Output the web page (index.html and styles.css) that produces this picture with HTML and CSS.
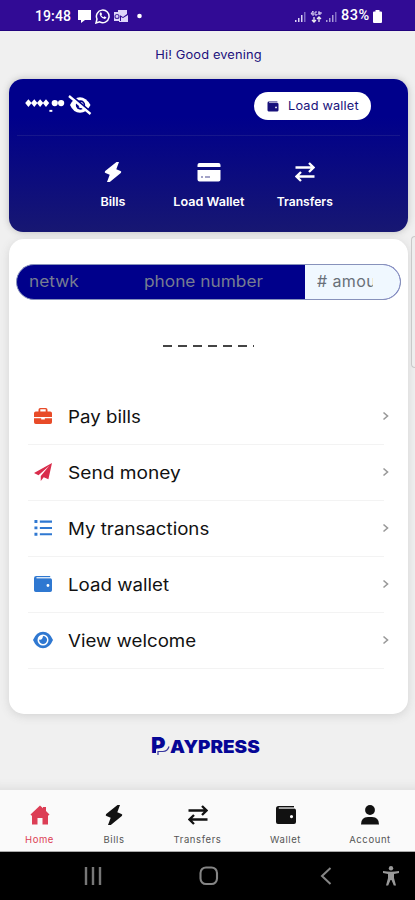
FILE: index.html
```html
<!DOCTYPE html>
<html lang="en">
<head>
<meta charset="utf-8">
<title>Paypress</title>
<link rel="stylesheet" href="styles.css">
</head>
<body>
<svg class="defs" aria-hidden="true">
  <symbol id="bolt" viewBox="0 0 20 20"><path d="M13.500 0 2.200 9q-1.200 1.300.3 2l4.200 1.800L4 20h2.800L17.800 11q1.200-1.300-.3-2l-4.200-1.800L16 0z"/></symbol>
  <symbol id="swap" viewBox="0 0 20 20"><path d="M.5 5.500H18M14 1l4.500 4.500L14 10M19.500 14.500H2M6 10l-4.500 4.500L6 19" fill="none" stroke="currentColor" stroke-width="2.300"/></symbol>
  <symbol id="wallet" viewBox="0 0 20 20"><path d="M2.500 1H18v1.500H2.800v1H18q2 0 2 2v11.500q0 2-2 2H2q-2 0-2-2V3.500Q0 1 2.500 1zm13 9a1.600 1.600 0 1 0 0 3.200 1.600 1.600 0 0 0 0-3.200z" fill-rule="evenodd"/><path class="flap" d="M2.800 2.500H18v1.300H2.800z"/></symbol>
  <symbol id="chev" viewBox="0 0 8 10"><path d="M1.500 1.500 5.500 5l-4 3.500" fill="none" stroke="currentColor" stroke-width="1.600"/></symbol>
</svg>
<div class="phone">
  <header class="status">
    <span class="time">19:48</span>
    <svg class="notices" viewBox="0 0 68 16">
      <path d="M1 2h13v10H8l-4 3v-3H1z" fill="#fff"/>
      <path d="m19 15 1-4a6.300 6.300 0 1 1 2.700 2.900z" fill="none" stroke="#fff" stroke-width="1.500"/>
      <path d="M23 4.500q-1 1.500.5 3.700 2 2.900 4.500 2.800l1.500-1.500-2-1.300-1 1q-1.500-.7-2.200-2l.8-1-.8-1.800z" fill="#fff"/>
      <path d="M41 2h9v4l-4 3-5-3zM37 4h6v9h-6zM44 9l2 1 5-3v7h-9v-1h2z" fill="#ded5fa"/>
      <circle cx="40" cy="8.500" r="2" fill="none" stroke="#4c2ba5" stroke-width="1.200"/>
      <circle cx="62.500" cy="8" r="2.300" fill="#fff"/>
    </svg>
    <svg class="signals" viewBox="0 0 44 16">
      <path d="M1 12h1.500v2H1zM4 10h1.500v4H4zM7 7h1.500v7H7z" fill="#ddd4f5"/>
      <path d="M10 4h1.500v10H10zM41 4h1.500v10H41z" fill="#806bc4"/>
      <path d="m19 3-2 3h3M19 3v5M23 4h-2v3h2V6M25 3v4M24 5h4M26 4v3" fill="none" stroke="#ddd4f5"/>
      <path d="M20 9v5m-2-2 2 2 2-2M25 14V9m-2 2 2-2 2 2" fill="none" stroke="#eee" stroke-width="1.300"/>
      <path d="M32 12h1.500v2H32zM35 10h1.500v4H35zM38 7h1.500v7H38z" fill="#aa9ad8"/>
    </svg>
    <span class="percent">83%</span>
    <svg class="battery" viewBox="0 0 9 13"><path d="M2.500 0h4v1.500H8q1 0 1 1V12q0 1-1 1H1q-1 0-1-1V2.500q0-1 1-1h1.500z" fill="#fff"/></svg>
  </header>

  <main class="page">
    <p class="greeting"><span>Hi! Good evening</span></p>

    <section class="balance">
      <div class="balance-top">
        <svg class="hidden-amount" viewBox="0 0 42 16" fill="#fff"><path d="m3.500 2 3.300 4-3.300 4-3.300-4zM9.500 2l3.300 4-3.300 4-3.300-4zM15.500 2l3.300 4-3.300 4-3.300-4zM21.500 2l3.300 4-3.300 4-3.300-4z"/><circle cx="30.500" cy="6" r="3.200"/><circle cx="37" cy="6" r="3.200"/><path d="M25 13h3v2h-3z"/></svg>
        <svg class="eye-off" viewBox="0 0 24 20"><path d="M2 10q4-7.800 10-7.800T22.500 10q-4 7.800-10.500 7.800T2 10z" fill="#fff"/><circle cx="12.500" cy="10" r="4.700" fill="#00008a"/><path d="M12.500 7a3 3 0 1 1-2 5l2-2z" fill="#fff"/><path d="m3 0 20 17" stroke="#00008a" stroke-width="1.800"/><path d="m1 1 21.500 18" stroke="#fff" stroke-width="2.300"/></svg>
        <button class="load-pill"><svg><use href="#wallet"/></svg><span>Load wallet</span></button>
      </div>
      <nav class="actions">
        <a class="action"><svg><use href="#bolt"/></svg><span>Bills</span></a>
        <a class="action"><svg class="card-icon" viewBox="0 0 24 20"><path d="M2.500 1h19q2 0 2 2v2H.5V3q0-2 2-2zM.5 8h23v9.500q0 2-2 2h-19q-2 0-2-2z" fill="#fff"/><path d="M4 15h2m2 0h5" stroke="#8585b5" stroke-width="1.500"/></svg><span>Load Wallet</span></a>
        <a class="action"><svg><use href="#swap"/></svg><span class="a-transfer">Transfers</span></a>
      </nav>
    </section>

    <section class="panel">
      <div class="topup">
        <span class="field network"><span class="wide">netwk</span></span>
        <span class="field number"><span class="wide">phone number</span></span>
        <span class="field amount"><span class="amount-text"># amount</span></span>
      </div>
      <div class="dashes"></div>
      <ul class="menu">
        <li><svg class="m-icon red" viewBox="0 0 20 20"><path d="M5 5V3q0-2 2-2h6q2 0 2 2v2h3q2 0 2 2v4H0V7q0-2 2-2zm2 0h6V2.500H7zM0 12.500h8V14h4v-1.500h8V17q0 2-2 2H2q-2 0-2-2z" fill-rule="evenodd"/></svg><span class="label">Pay bills</span><svg class="chev"><use href="#chev"/></svg></li>
        <li><svg class="m-icon crimson" viewBox="0 0 20 20"><path d="M20 0 0 11l5 2.500L17 3 7.500 14.500V20l3.300-4.200L16 18z"/></svg><span class="label send">Send money</span><svg class="chev"><use href="#chev"/></svg></li>
        <li><svg class="m-icon blue" viewBox="0 0 20 20"><path d="M.5 1.200h3.300v3.300H.5zM.5 8.200h3.300v3.300H.5zM.5 15.200h3.300v3.300H.5zM6.500 1.800H20v2.300H6.500zM6.500 8.800H20v2.300H6.500zM6.500 15.800H20v2.300H6.500z"/></svg><span class="label">My transactions</span><svg class="chev"><use href="#chev"/></svg></li>
        <li><svg class="m-icon blue"><use href="#wallet"/></svg><span class="label">Load wallet</span><svg class="chev"><use href="#chev"/></svg></li>
        <li><svg class="m-icon m-eye blue" viewBox="0 0 20 18"><path d="M0 9q3.500-8.200 10-8.200T20 9q-3.500 8.200-10 8.200T0 9z"/><circle cx="10" cy="9" r="5.500" fill="#fff"/><path d="M10 5a4 4 0 1 1-3.900 3.500Q9.500 9.500 10 5z"/></svg><span class="label">View welcome</span><svg class="chev"><use href="#chev"/></svg></li>
      </ul>
    </section>
    <div class="scroll-edge"></div>

    <div class="brand"><span class="brand-p">P</span><span class="brand-rest">AYPRESS</span>
      <svg class="brand-mark" viewBox="0 0 18 20"><path d="M4.500 17v-3.500H10q4.500 0 6-4" fill="none" stroke="#f0f0f0" stroke-width="1"/><path d="M6 19v-3.500h5q4.500 0 6-5" fill="none" stroke="#37379f" stroke-width="1.200"/></svg>
    </div>
  </main>

  <nav class="tabs">
    <a class="tab active"><svg viewBox="0 0 20 20"><path d="m10 .5 3 2.700V2h3v4l3.500 3.400-1 1.100H18V19.500h-5.500V13h-5v6.500H2v-9h-.7l-.8-1z"/></svg><span>Home</span></a>
    <a class="tab"><svg><use href="#bolt"/></svg><span>Bills</span></a>
    <a class="tab"><svg><use href="#swap"/></svg><span>Transfers</span></a>
    <a class="tab"><svg><use href="#wallet"/></svg><span>Wallet</span></a>
    <a class="tab"><svg viewBox="0 0 20 20"><circle cx="10" cy="5" r="4.900"/><path d="M1 19.500Q1 12 8 12h4q7 0 7 7.500z"/></svg><span>Account</span></a>
  </nav>

  <footer class="system">
    <svg class="s-recent" viewBox="0 0 18 18"><path d="M2 0v18M9 0v18M16 0v18" stroke="#777" stroke-width="2.400"/></svg>
    <svg class="s-home" viewBox="0 0 20 20"><rect x="1.500" y="1.500" width="16.500" height="16.500" rx="5.500" fill="none" stroke="#858585" stroke-width="2.100"/></svg>
    <svg class="s-back" viewBox="0 0 12 18"><path d="M10.500 1 2 9l8.500 8" fill="none" stroke="#858585" stroke-width="2"/></svg>
    <svg class="s-access" viewBox="0 0 16 20"><circle cx="8" cy="2.300" r="2.200" fill="#999"/><path d="M0 5q8 1.500 16 0v2l-5 1v4l2 7.500h-2.200L8.500 14h-1l-2.300 5.500H3L5 12V8L0 7z" fill="#999"/></svg>
  </footer>
</div>
</body>
</html>
```

FILE: styles.css
```css
* { box-sizing: border-box; }
body { margin: 0; font-family: Inter, "Open Sans", sans-serif; background: #f0f0f0; }
.defs { position: absolute; width: 0; height: 0; }
svg { display: block; flex: none; fill: currentColor; }
.phone { width: 415px; height: 900px; display: flex; flex-direction: column; overflow: hidden; }

.status { height: 31px; display: flex; align-items: center; padding: 2px 33px 0 35px; background: #310b95; border-bottom: 1px solid #22037e; color: #fff; }
.time, .percent { font: 500 14px/20px Roboto, sans-serif; white-space: nowrap; }
.time { width: 42px; letter-spacing: .1px; }
.notices { width: 68px; height: 16px; }
.signals { width: 44px; height: 16px; margin-left: auto; }
.percent { width: 32px; margin-left: 3px; font-size: 14.500px; letter-spacing: .5px; }
.battery { width: 9px; height: 13px; }

.page { height: 759px; display: flex; flex-direction: column; position: relative; padding: 0 7px 0 9px; background: #f0f0f0; box-shadow: inset 0 -12px 10px -10px #ddd; }
.greeting { margin: 0; height: 48px; text-align: center; font-size: 11.500px; line-height: 48px; color: #21107c; }
.greeting span { display: inline-block; letter-spacing: .1px; transform: scaleX(1.120); }

.balance { height: 153px; border-radius: 14px; background: linear-gradient(#00008b 25%, #171772); color: #fff; box-shadow: 0 0 7px #bbb; }
.balance-top { height: 57px; display: flex; align-items: center; margin: 0 8px; padding: 0 29px 4px 8px; border-bottom: 1px solid #17178b; }
.hidden-amount { width: 41px; height: 16px; margin-top: 0; }
.eye-off { width: 24px; height: 20px; margin-left: 2px; }
.load-pill { display: flex; align-items: center; width: 117px; height: 28px; margin: 2px 0 0 auto; padding: 0 0 0 13px; border: 0; border-radius: 14px; background: #fff; color: #17107b; font: 11.500px Inter, sans-serif; white-space: nowrap; }
.load-pill span { display: block; letter-spacing: .15px; transform: scaleX(1.110); transform-origin: left; }
.load-pill svg { width: 12px; height: 11px; margin-right: 9px; }
.flap { fill: #fff; opacity: .35; }
.actions { display: grid; grid-template-columns: 96px 96px 96px; justify-content: center; padding: 26px 0 0 0; }
.action { display: flex; flex-direction: column; align-items: center; font-size: 12px; font-weight: 600; line-height: 16px; white-space: nowrap; }
.action span { transform: scaleX(1.050); }
.action .a-transfer { transform: scaleX(1.010); }
.action svg { width: 20px; height: 20px; margin-bottom: 12px; }
.action .card-icon { width: 24px; }

.panel { height: 475px; margin-top: 7px; padding: 25px 7px 0; border-radius: 15px; background: #fff; box-shadow: 0 2px 10px #d3d3d3; }
.topup { display: flex; height: 36px; overflow: hidden; border: 1px solid #8792bb; border-radius: 18px; background: #00008b; color: #777d91; font-size: 16px; line-height: 33px; white-space: nowrap; }
.network { width: 116px; padding-left: 12px; }
.number { width: 172px; padding-left: 11px; }
.wide { display: inline-block; transform: scaleX(1.080); transform-origin: left; }
.amount { flex: 1; padding-left: 12px; background: #f0f8ff; color: #697078; }
.amount-text { display: block; width: 56px; overflow: hidden; letter-spacing: .4px; }
.dashes { width: 91px; height: 2px; margin: 45px 0 42px 147px; background: repeating-linear-gradient(90deg, #444 0 9px, transparent 9px 15px); }
.menu { list-style: none; margin: 0 17px 0 12px; padding: 0; }
.menu li { height: 56.100px; display: flex; align-items: center; padding: 0 0 0 5px; border-bottom: 1px solid #f3f3f3; font-size: 17px; color: #111; white-space: nowrap; }
.label { display: block; transform: scaleX(1.100); transform-origin: left; }
.send { transform: scaleX(1.125); }
.m-icon { width: 18px; height: 18px; margin: -2px 17px 0 1px; }
.m-icon + .label { margin-left: -1px; }
.m-eye { width: 20px; margin: -2px 16px 0 0; }
.red { color: #e84b28; }
.crimson { color: #d92d4c; }
.blue { color: #2f78d1; }
.chev { width: 8px; height: 10px; margin: -2px -6px 0 auto; color: #999; }

.scroll-edge { position: absolute; right: 0; top: 205px; width: 4px; height: 132px; border: 1px solid #c9c9c9; border-right: 0; border-radius: 4px 0 0 4px; background: #eee; }
.brand { position: relative; display: flex; align-items: baseline; height: 30px; margin-top: 17px; padding-left: 142px; color: #060696; font-weight: 900; line-height: 28px; }
.brand-p { width: 19px; font-size: 22px; }
.brand-rest { font-size: 17px; transform: scaleX(1.110); transform-origin: left; }
.brand-mark { position: absolute; left: 143px; top: 5px; width: 18px; height: 20px; }

.tabs { height: 62px; display: grid; grid-template-columns: 79px 70px 97px 79px 90px; background: #fafafa; border-bottom: 1px solid #aaa; color: #111; }
.tab { display: flex; flex-direction: column; align-items: center; padding-top: 15px; font-size: 9.500px; line-height: 14px; letter-spacing: .6px; }
.tab svg { width: 20px; height: 20px; margin-bottom: 8px; }
.tab span { color: #555; }
.active, .active span { color: #dc3e55; }

.system { height: 48px; display: flex; align-items: center; padding: 0 16px 0 84px; background: #000; }
.s-recent { width: 18px; height: 18px; }
.s-home { width: 20px; height: 20px; margin-left: 97px; }
.s-back { width: 12px; height: 18px; margin-left: 101px; }
.s-access { width: 16px; height: 20px; margin-left: auto; }
```
